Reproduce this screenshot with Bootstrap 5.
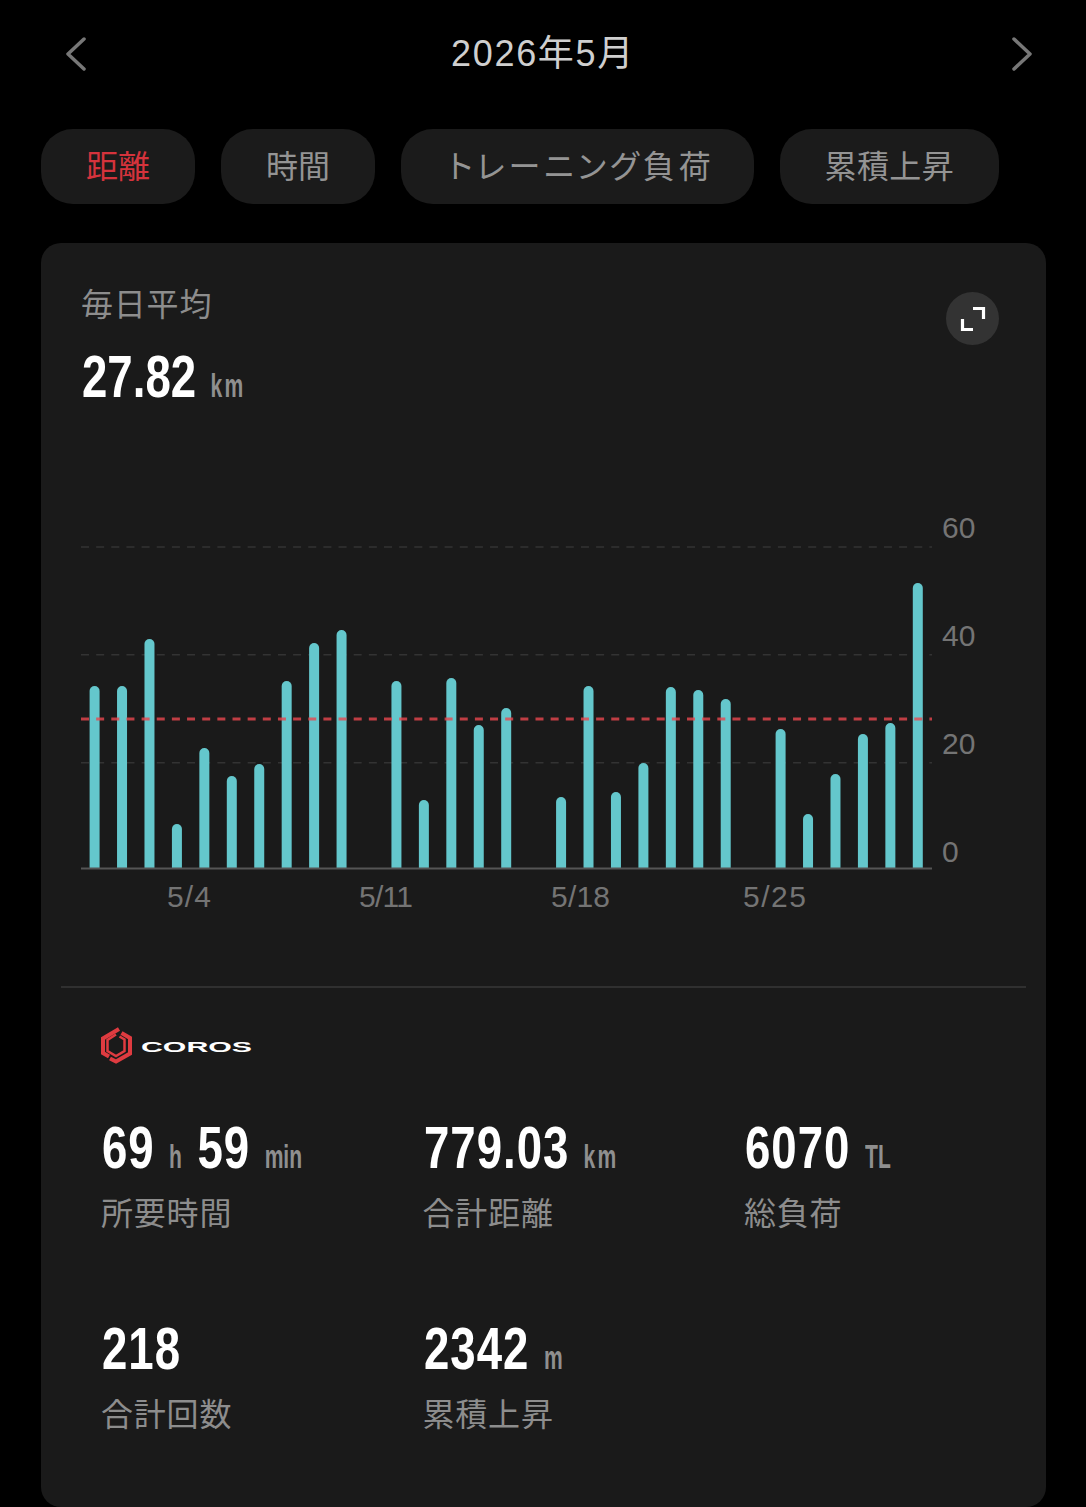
<!doctype html>
<html lang="ja">
<head>
<meta charset="utf-8">
<title>2026年5月</title>
<link href="https://cdn.jsdelivr.net/npm/bootstrap@5.3.0/dist/css/bootstrap.min.css" rel="stylesheet">
<style>
html,body{background:#000;}
body{height:1507px;overflow:hidden;font-family:"Liberation Sans","Noto Sans CJK JP",sans-serif;font-feature-settings:"palt";}
.top-bar{height:107px;padding:0 54px 0 66px;}
.top-title{font-size:36px;color:#cfcfcf;letter-spacing:1.7px;line-height:1;margin-right:12px;font-feature-settings:normal;}
.tab-row{padding-left:41px;gap:26px;margin-top:22px;}
.tab-pill{height:75px;padding:0 45px;border-radius:32px;background:#1b1b1b;color:#949494;font-size:32px;line-height:1;}
.tab-pill.is-on{color:#d5333c;}
.tab-pill.is-long{letter-spacing:3.9px;padding:0 39px 0 47px;}
.tab-pill.is-wide{letter-spacing:.4px;}
.panel{margin:39px 40px 0 41px;background:#1a1a1a;border-radius:20px;height:1264px;}
.panel-head{padding:43px 47px 0 41px;height:187px;}
.soft-label{font-size:32px;line-height:38px;color:#8d8d8d;letter-spacing:.8px;margin-left:-1px;}
.figure{font-weight:700;color:#fff;font-size:60px;line-height:60px;white-space:nowrap;transform:scaleX(.76);transform-origin:left center;letter-spacing:1.3px;}
.figure-top{margin-top:23px;letter-spacing:0;}
.unit{display:inline-block;font-weight:700;color:#8f8f8f;font-size:33px;line-height:1;letter-spacing:0;margin-left:19px;transform:scaleX(.84);transform-origin:left center;}
.unit-km{letter-spacing:3.5px;}
.unit-gap{margin-right:17px;}
.round-btn{width:53px;height:53px;background:#333;border-radius:50%;margin-top:6px;}
.chart-box{display:block;}
.chart-box text{font-family:"Liberation Sans",sans-serif;font-size:30px;fill:#747474;}
.rule{border-top:2px solid #303030;margin:0 20px;}
.brand{padding:38px 0 0 58px;height:130px;}
.brand text{font-family:"Liberation Sans",sans-serif;font-weight:700;fill:#fff;font-size:15px;}
.stats{padding-left:61px;display:grid;grid-template-columns:321.5px 321.5px 1fr;grid-auto-rows:201px;}
.stat .soft-label{margin-top:17px;}
</style>
</head>
<body>
<header class="top-bar d-flex align-items-center justify-content-between">
  <svg width="20" height="36" viewBox="0 0 20 36" fill="none" stroke="#777" stroke-width="3.5" stroke-linecap="round" stroke-linejoin="round"><path d="M18 3 2 18l16 15"/></svg>
  <div class="top-title">2026年5月</div>
  <svg width="20" height="36" viewBox="0 0 20 36" fill="none" stroke="#777" stroke-width="3.5" stroke-linecap="round" stroke-linejoin="round"><path d="m2 3 16 15L2 33"/></svg>
</header>
<nav class="tab-row d-flex">
  <div class="tab-pill is-on d-flex align-items-center">距離</div>
  <div class="tab-pill d-flex align-items-center">時間</div>
  <div class="tab-pill is-long d-flex align-items-center">トレーニング負荷</div>
  <div class="tab-pill is-wide d-flex align-items-center">累積上昇</div>
</nav>
<main class="panel">
  <div class="panel-head d-flex justify-content-between align-items-start">
    <div>
      <div class="soft-label">毎日平均</div>
      <div class="figure figure-top">27.82<span class="unit unit-km">km</span></div>
    </div>
    <div class="round-btn d-flex align-items-center justify-content-center">
      <svg width="26" height="26" viewBox="0 0 26 26" fill="none" stroke="#fff" stroke-width="3.2"><path d="M13 2.500h10.500V13"/><path d="M2.500 13v10.500H13"/></svg>
    </div>
  </div>
  <svg class="chart-box" id="chart" width="1005" height="556" viewBox="41 430 1005 556">
    <g stroke="#333" stroke-width="1.500" stroke-dasharray="8 7.150">
      <path d="M81 547h851"/><path d="M81 654.700h851"/><path d="M81 762.700h851"/>
    </g>
    <g id="bars" fill="#64c7cc"></g>
    <path d="M81 868.500h851" stroke="#555" stroke-width="2"/>
    <path d="M81 719h851" stroke="#e8474f" stroke-opacity=".8" stroke-width="3" stroke-dasharray="8 7.150"/>
    <text x="942" y="538">60</text>
    <text x="942" y="646">40</text>
    <text x="942" y="754">20</text>
    <text x="942" y="862">0</text>
    <text x="167" y="907" textLength="44">5/4</text>
    <text x="359" y="907" textLength="54">5/11</text>
    <text x="551" y="907" textLength="59">5/18</text>
    <text x="743" y="907" textLength="63">5/25</text>
  </svg>
  <div class="rule"></div>
  <div class="brand">
    <svg width="160" height="40" viewBox="0 0 160 40">
      <g fill="none" stroke="#df3b40" stroke-width="4">
        <path d="M20 3 4 12.500V27l6 3.500"/><path d="M22.500 7 31 12v15.500L17 35.500l-6-3"/><path d="M17 8.500 8.500 14v11l8.500 5 8.500-5V13.500l-5-3" stroke-width="2.500"/>
      </g>
      <text x="42" y="26" textLength="111" lengthAdjust="spacingAndGlyphs">COROS</text>
    </svg>
  </div>
  <div class="stats">
    <div class="stat"><div class="figure">69<span class="unit unit-gap">h</span>59<span class="unit">min</span></div><div class="soft-label">所要時間</div></div>
    <div class="stat"><div class="figure">779.03<span class="unit unit-km">km</span></div><div class="soft-label">合計距離</div></div>
    <div class="stat"><div class="figure">6070<span class="unit">TL</span></div><div class="soft-label">総負荷</div></div>
    <div class="stat"><div class="figure">218</div><div class="soft-label">合計回数</div></div>
    <div class="stat"><div class="figure">2342<span class="unit">m</span></div><div class="soft-label">累積上昇</div></div>
  </div>
</main>
<script>
var tops=[686,686,639,824,748,776,764,681,643,630,0,681,800,678,725,708,0,797,686,792,763,687,690,699,0,729,814,774,734,723,583];
var g=document.getElementById('bars'),s='';
tops.forEach(function(t,i){if(!t)return;var x=89.6+27.44*i;
 s+='<path d="M'+x+' 869V'+(t+5)+'a5 5 0 0 1 10 0V869z"/>';});
g.innerHTML=s;
</script>
</body>
</html>
